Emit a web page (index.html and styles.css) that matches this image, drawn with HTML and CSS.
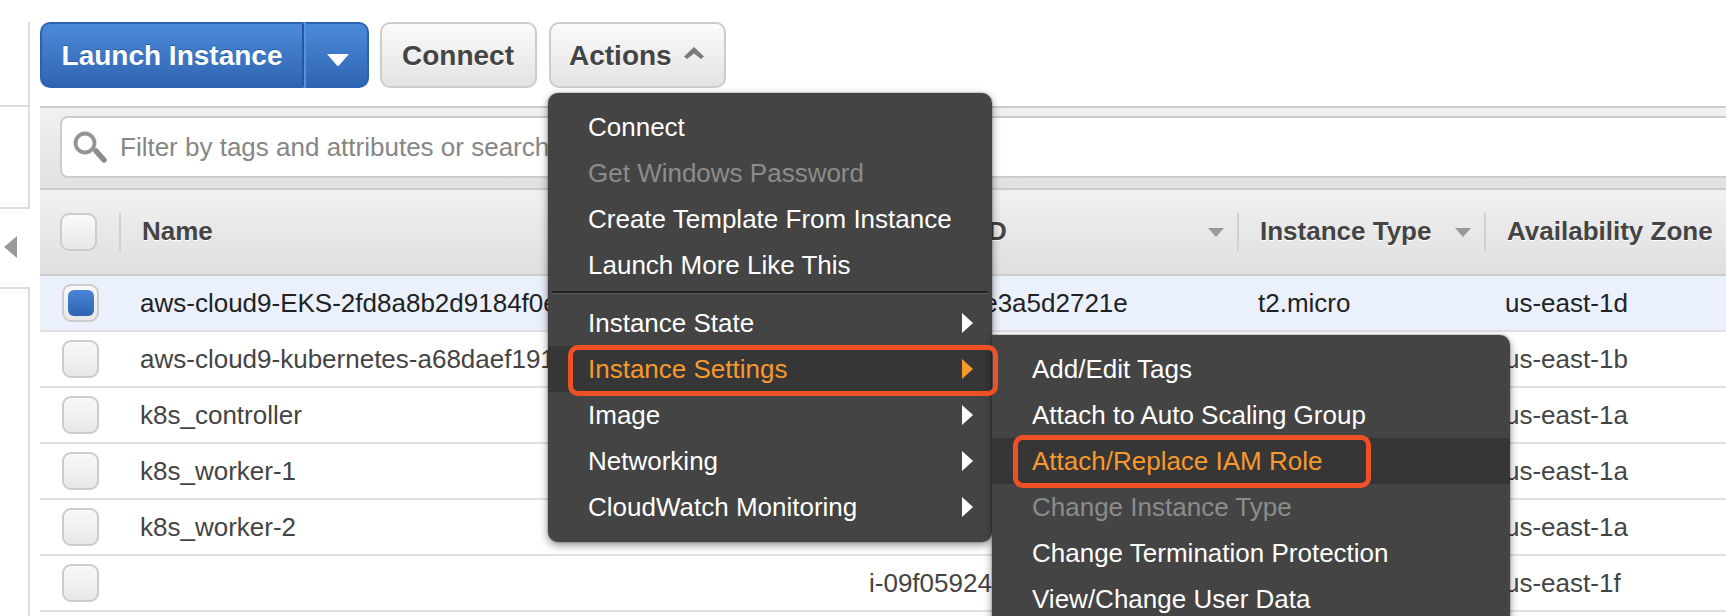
FILE: index.html
```html
<!DOCTYPE html>
<html lang="en">
<head>
  <meta charset="UTF-8">
  <title>Instances</title>
  <link rel="stylesheet" href="styles.css">
</head>
<body>
  <aside class="side">
    <div class="side-box side-top"></div>
    <div class="side-box side-mid"></div>
    <div class="side-toggle"><span class="toggle-arrow"></span></div>
    <div class="side-box side-low"></div>
  </aside>

  <main class="main">
    <div class="toolbar">
      <div class="btn-split">
        <button class="btn-launch">Launch Instance</button>
        <button class="btn-caret">
          <svg width="22" height="12" viewBox="0 0 22 12"><path d="M0 0H22L12 11.5Q11 12.4 10 11.5Z" fill="#fff"/></svg>
        </button>
      </div>
      <button class="btn btn-connect">Connect</button>
      <div class="actions">
        <button class="btn btn-actions">Actions
          <svg width="20" height="12" viewBox="0 0 20 12"><path d="M10 0L20 9.5L17 12L10 6.5L3 12L0 9.5Z" fill="#7a7a7a"/></svg>
        </button>

        <div class="menu">
          <div class="item">Connect</div>
          <div class="item disabled">Get Windows Password</div>
          <div class="item">Create Template From Instance</div>
          <div class="item">Launch More Like This</div>
          <div class="menu-sep"></div>
          <div class="item">Instance State<span class="arrow"></span></div>
          <div class="item active">Instance Settings<span class="arrow"></span>
            <span class="mark mark-settings"></span>
            <div class="submenu">
              <div class="item">Add/Edit Tags</div>
              <div class="item">Attach to Auto Scaling Group</div>
              <div class="item active">Attach/Replace IAM Role
                <span class="mark mark-role"></span>
              </div>
              <div class="item disabled">Change Instance Type</div>
              <div class="item">Change Termination Protection</div>
              <div class="item">View/Change User Data</div>
            </div>
          </div>
          <div class="item">Image<span class="arrow"></span></div>
          <div class="item">Networking<span class="arrow"></span></div>
          <div class="item">CloudWatch Monitoring<span class="arrow"></span></div>
        </div>
      </div>
    </div>

    <div class="filter">
      <div class="search">
        <svg class="search-icon" width="36" height="36" viewBox="0 0 36 36">
          <circle cx="13" cy="14" r="9.5" fill="#fff" stroke="#949494" stroke-width="3.8"/>
          <path d="M24 22L32 31" stroke="#8c8c8c" stroke-width="5.5" stroke-linecap="round"/>
        </svg>
        <span>Filter by tags and attributes or search</span>
      </div>
    </div>

    <div class="head">
      <div class="th-check"><span class="check"></span></div>
      <div class="th">Name</div>
      <div class="th">Instance ID<span class="sort"></span></div>
      <div class="th">Instance Type<span class="sort"></span></div>
      <div class="th">Availability Zone<span class="sort"></span></div>
    </div>

    <!-- the menus cover the other cells of these rows -->
    <div class="row selected">
      <div><span class="check"><span class="check-on"></span></span></div>
      <div>aws-cloud9-EKS-2fd8a8b2d9184f0e</div>
      <div>i-0b71c94e3a5d2721e</div>
      <div>t2.micro</div>
      <div>us-east-1d</div>
    </div>
    <div class="row">
      <div><span class="check"></span></div>
      <div>aws-cloud9-kubernetes-a68daef191</div>
      <div></div>
      <div></div>
      <div>us-east-1b</div>
    </div>
    <div class="row">
      <div><span class="check"></span></div>
      <div>k8s_controller</div>
      <div></div>
      <div></div>
      <div>us-east-1a</div>
    </div>
    <div class="row">
      <div><span class="check"></span></div>
      <div>k8s_worker-1</div>
      <div></div>
      <div></div>
      <div>us-east-1a</div>
    </div>
    <div class="row">
      <div><span class="check"></span></div>
      <div>k8s_worker-2</div>
      <div></div>
      <div></div>
      <div>us-east-1a</div>
    </div>
    <div class="row">
      <div><span class="check"></span></div>
      <div></div>
      <div>i-09f05924</div>
      <div></div>
      <div>us-east-1f</div>
    </div>
  </main>
</body>
</html>
```

FILE: styles.css
```css
html, body {
  height: 616px;
}
body {
  margin: 0;
  display: flex;
  overflow: hidden;
  background: #fff;
  font-family: "Liberation Sans", Arial, sans-serif;
  font-size: 26px;
  color: #444;
}

/* left panel, mostly cut off */
.side {
  width: 40px;
  flex: none;
  padding-top: 22px;
  box-sizing: border-box;
}
.side-box {
  width: 30px;
  box-sizing: border-box;
  border-right: 2px solid #ddd;
}
.side-top {
  height: 85px;
  border-bottom: 2px solid #ddd;
}
.side-mid {
  height: 102px;
  border-bottom: 2px solid #ddd;
}
.side-toggle {
  height: 78px;
  display: flex;
  align-items: center;
  padding-left: 4px;
  padding-bottom: 2px;
  box-sizing: border-box;
}
.toggle-arrow {
  border-right: 13px solid #999;
  border-top: 11px solid transparent;
  border-bottom: 11px solid transparent;
}
.side-low {
  height: 340px;
  border-top: 2px solid #ddd;
}

.main {
  flex: 1;
  min-width: 0;
}

/* toolbar */
.toolbar {
  display: flex;
  gap: 12px;
  padding-top: 22px;
  margin-bottom: 18px;
}
button {
  font-family: inherit;
  font-size: 28px;
  font-weight: bold;
  height: 66px;
  margin: 0;
  padding-top: 3px;
  box-sizing: border-box;
}
.btn-split {
  display: flex;
  margin-right: -1px;
}
.btn-launch,
.btn-caret {
  color: #fff;
  background: linear-gradient(to bottom, #4c8ad9, #2f65b3);
  border: 2px solid #2c62b2;
  text-shadow: 0 -1px 0 #2a5a9f;
}
.btn-launch {
  width: 264px;
  padding-left: 0;
  padding-right: 0;
  border-radius: 10px 0 0 10px;
  border-right-color: #28579e;
}
.btn-caret {
  width: 65px;
  padding: 3px 0 0 3px;
  border-left: 2px solid #5a90d6;
  border-radius: 0 10px 10px 0;
}
.btn {
  padding-left: 20px;
  padding-right: 20px;
  color: #444;
  background: linear-gradient(to bottom, #fbfbfb, #e3e3e3);
  border: 2px solid #ccc;
  border-radius: 10px;
  text-shadow: 0 1px 0 #fff;
}
.btn-connect {
  padding-right: 21px;
}
.btn-actions {
  display: flex;
  align-items: center;
  gap: 12px;
  padding-left: 18px;
  padding-right: 20px;
}
.btn-actions svg {
  margin-top: -6px;
}

/* dropdown */
.actions {
  position: relative;
}
.menu {
  position: absolute;
  z-index: 5;
  top: 71px;
  left: -1px;
  width: 444px;
  padding: 11px 0 12px;
  box-sizing: border-box;
  background: #444;
  border-radius: 10px;
  box-shadow: 0 0 0 1px rgba(0,0,0,.12), 0 3px 9px rgba(0,0,0,.45);
  color: #fff;
}
.item {
  position: relative;
  display: flex;
  align-items: center;
  justify-content: space-between;
  height: 46px;
  padding: 0 19px 0 40px;
}
.item.disabled {
  color: #8c8c8c;
}
.item.active {
  background: #363636;
  color: #f7992c;
}
.menu-sep {
  height: 2px;
  margin: 3px 4px 7px;
  background: #222;
  box-shadow: 0 1px 0 #5c5c5c;
}
.arrow {
  border-left: 11px solid currentColor;
  border-top: 10px solid transparent;
  border-bottom: 10px solid transparent;
}
.submenu {
  position: absolute;
  z-index: 2;
  top: -11px;
  left: 100%;
  width: 518px;
  height: 300px;
  padding-top: 11px;
  box-sizing: border-box;
  background: #444;
  border-radius: 0 10px 0 0;
  box-shadow: 0 0 0 1px rgba(0,0,0,.12), 0 3px 9px rgba(0,0,0,.45);
  color: #fff;
}

/* orange annotations from the screenshot */
.mark {
  position: absolute;
  z-index: 3;
  box-sizing: border-box;
  border: 5px solid #ee5125;
  border-radius: 10px;
}
.mark-settings {
  top: -1px;
  bottom: -4px;
  left: 20px;
  right: -6px;
}
.mark-role {
  top: -3px;
  bottom: -4px;
  left: 21px;
  width: 358px;
}

/* filter */
.filter {
  height: 84px;
  box-sizing: border-box;
  padding: 8px 0 10px 20px;
  background: linear-gradient(to bottom, #f1f1f1, #e1e1e1);
  border-top: 2px solid #ccc;
  border-bottom: 2px solid #ccc;
}
.search {
  display: flex;
  align-items: center;
  gap: 12px;
  height: 62px;
  margin-right: -12px;
  padding-left: 10px;
  box-sizing: border-box;
  background: #fff;
  border: 2px solid #ccc;
  border-radius: 8px;
  color: #868686;
  white-space: nowrap;
}

/* table */
.head,
.row {
  display: grid;
  align-items: center;
  white-space: nowrap;
}
.head {
  grid-template-columns: 79px 726px 392px 247px 273px;
  width: 1717px;
  height: 86px;
  box-sizing: border-box;
  background: linear-gradient(to bottom, #f1f1f1, #dfdfdf);
  border-bottom: 2px solid #ccc;
  font-weight: bold;
  text-shadow: 0 1px 0 #fff;
}
.th-check {
  display: flex;
  padding-left: 20px;
}
.th {
  display: flex;
  align-items: center;
  justify-content: space-between;
  height: 38px;
  padding-left: 21px;
  padding-right: 13px;
  padding-bottom: 2px;
  box-sizing: border-box;
  border-left: 2px solid #d0d0d0;
}
.sort {
  margin-top: 2px;
  border-top: 9px solid #999;
  border-left: 8px solid transparent;
  border-right: 8px solid transparent;
}
.row {
  grid-template-columns: 100px 729px 389px 247px 221px;
  height: 56px;
  box-sizing: border-box;
  border-bottom: 2px solid #e0e0e0;
}
.row > div:first-child {
  display: flex;
  padding-left: 22px;
}
.row.selected {
  background: #eaf1fc;
  color: #222;
}
.check {
  display: flex;
  align-items: center;
  justify-content: center;
  width: 37px;
  height: 38px;
  box-sizing: border-box;
  background: linear-gradient(to bottom, #f9f9f9, #e8e8e8);
  border: 2px solid #ccc;
  border-radius: 9px;
}
.check-on {
  width: 26px;
  height: 26px;
  background: linear-gradient(to bottom, #4a86d6, #2d63b2);
  border-radius: 6px;
}
```
